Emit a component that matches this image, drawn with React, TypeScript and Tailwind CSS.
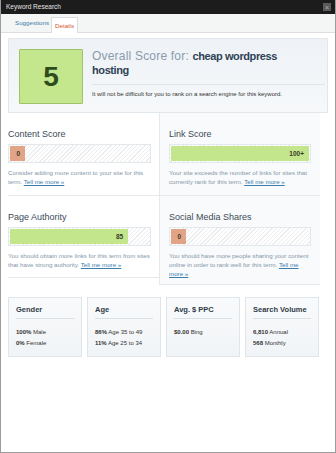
import React from "react";

type Metric = {
  title: string;
  value: string;
  pct: number;
  tone: "green" | "orange";
  text: string;
  cellClass: string;
};

const hatch =
  "bg-[repeating-linear-gradient(135deg,#ebedef_0px,#ebedef_1px,#ffffff_1px,#ffffff_3px)]";

const Bar = ({ value, pct, tone }: { value: string; pct: number; tone: "green" | "orange" }) => (
  <div className={`h-[19px] border border-[#e2e8ec] p-px ${hatch}`}>
    <div
      className={`h-full flex items-center justify-end pr-[5px] text-[6.5px] font-bold text-[#3a3a2a] ${
        tone === "green" ? "bg-[#c3e68c]" : "bg-[#e2a487]"
      }`}
      style={{ width: pct === 0 ? 15 : `${pct}%` }}
    >
      {value}
    </div>
  </div>
);

const MetricCell = ({ m }: { m: Metric }) => (
  <div className={m.cellClass}>
    <h3 className="text-[9px] leading-[10px] text-[#3c4a58]">{m.title}</h3>
    <div className="mt-[5px]">
      <Bar value={m.value} pct={m.pct} tone={m.tone} />
    </div>
    <p className="mt-[5px] text-[6.2px] leading-[9px] text-[#8497a9]">
      {m.text}{" "}
      <a className="text-[#3b7dab] underline">Tell me more »</a>
    </p>
  </div>
);

const cards = [
  { title: "Gender", rows: [["100%", "Male"], ["0%", "Female"]] },
  { title: "Age", rows: [["86%", "Age 35 to 49"], ["11%", "Age 25 to 34"]] },
  { title: "Avg. $ PPC", rows: [["$0.00", "Bing"]] },
  { title: "Search Volume", rows: [["6,810", "Annual"], ["568", "Monthly"]] },
];

export default function App() {
  const left: Metric[] = [
    {
      title: "Content Score",
      value: "0",
      pct: 0,
      tone: "orange",
      text: "Consider adding more content to your site for this term.",
      cellClass: "h-[83px] pt-[16px] pr-[8px] border-b border-[#e5e9ec]",
    },
    {
      title: "Page Authority",
      value: "85",
      pct: 85,
      tone: "green",
      text: "You should obtain more links for this term from sites that have strong authority.",
      cellClass: "h-[82px] pt-[16px] pr-[8px] border-b border-[#e5e9ec]",
    },
  ];
  const right: Metric[] = [
    {
      title: "Link Score",
      value: "100+",
      pct: 100,
      tone: "green",
      text: "Your site exceeds the number of links for sites that currently rank for this term.",
      cellClass: "h-[83px] pt-[16px] px-[9px] border-b border-[#e5e9ec]",
    },
    {
      title: "Social Media Shares",
      value: "0",
      pct: 0,
      tone: "orange",
      text: "You should have more people sharing your content online in order to rank well for this term.",
      cellClass: "h-[89px] pt-[16px] px-[9px] border-b border-[#e5e9ec]",
    },
  ];

  return (
    <div className="w-[336px] h-[453px] bg-white border border-[#9c9c9c] border-t-0 flex flex-col font-['Liberation_Sans',Arial,sans-serif] overflow-hidden">
      {/* title bar */}
      <div className="h-[14px] bg-[#1c1c1c] flex items-center justify-between pl-[5px] pr-[4px]">
        <span className="text-[6.5px] text-[#e4e4e4]">Keyword Research</span>
        <span className="w-[8px] h-[8px] bg-[#5a5a5a] flex items-center justify-center text-[7px] leading-none text-[#b0b0b0]">
          ×
        </span>
      </div>

      {/* tabs */}
      <div className="h-[19px] bg-[#f4f5f5] border-b border-[#dedede] flex items-end pl-[14px] gap-[2px]">
        <span className="text-[6.2px] text-[#3d7ea6] pb-[5px]">Suggestions</span>
        <span className="h-[16px] bg-white border border-b-0 border-[#dcdcdc] px-[3px] text-[6.2px] text-[#d6532c] flex items-center -mb-px">
          Details
        </span>
      </div>

      <div className="px-[7px] pt-[5px]">
        {/* overall score */}
        <div className="h-[75px] border border-[#e1e7eb] bg-[linear-gradient(#eef2f6,#f6f8fa)] flex pl-[10px] pt-[10px]">
          <div className="w-[64px] h-[55px] shrink-0 bg-[#c4e78e] border border-[#9ec46b] rounded-[1px] flex items-center justify-center text-[28px] font-bold text-[#2e4d1c]">
            5
          </div>
          <div className="flex-1 ml-[9px] pr-[2px]">
            <h2 className="w-[200px] leading-[12.5px] text-[#2f4256]">
              <span className="text-[12px] tracking-[0.2px] text-[#8a9bad]">Overall Score for: </span>
              <span className="text-[11px] font-bold tracking-[-0.4px]">cheap wordpress hosting</span>
            </h2>
            <div className="mt-[8px] border-t border-[#dfe4e8]" />
            <p className="mt-[6px] text-[6px] leading-[7px] text-[#333]">
              It will not be difficult for you to rank on a search engine for this keyword.
            </p>
          </div>
        </div>

        {/* metrics */}
        <div className="flex">
          <div className="w-[151px] bg-white">
            {left.map((m) => (
              <MetricCell key={m.title} m={m} />
            ))}
          </div>
          <div className="w-[161px] bg-[#f9fafb] border-l border-[#e5e9ec]">
            {right.map((m) => (
              <MetricCell key={m.title} m={m} />
            ))}
          </div>
        </div>

        {/* stats */}
        <div className="mt-[12px] flex gap-[5px]">
          {cards.map((c) => (
            <div
              key={c.title}
              className="w-[74px] h-[60px] border border-[#dfe6eb] bg-[linear-gradient(#f9fafb,#f1f4f7)] px-[7px] pt-[8px]"
            >
              <h4 className="text-[7.5px] leading-[8px] font-bold text-[#2f3b47] pb-[4px] border-b border-[#d9e0e6]">
                {c.title}
              </h4>
              <div className="mt-[10px] flex flex-col gap-[4px]">
                {c.rows.map(([n, label]) => (
                  <div key={label} className="text-[6px] leading-[7px] text-[#333]">
                    <span className="font-bold">{n}</span> {label}
                  </div>
                ))}
              </div>
            </div>
          ))}
        </div>
      </div>
    </div>
  );
}
